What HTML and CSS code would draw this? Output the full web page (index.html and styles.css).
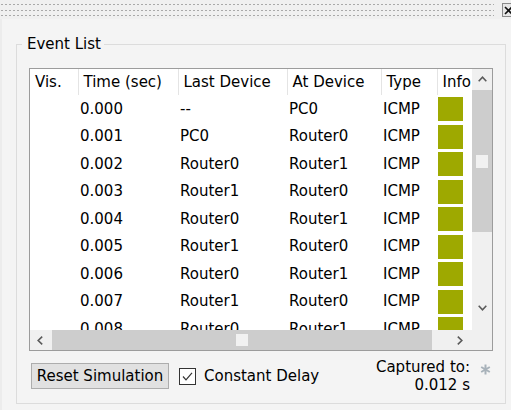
FILE: index.html
```html
<!DOCTYPE html>
<html>
<head>
<meta charset="utf-8">
<link rel="stylesheet" href="styles.css">
</head>
<body>
<div class="titlebar">
  <div class="grip"></div>
  <div class="close"><svg width="9" height="9" viewBox="0 0 9 9"><path d="M1 1L8 8M8 1L1 8" stroke="#111" stroke-width="1.6"/></svg></div>
</div>
<div class="panel">
  <fieldset class="group">
    <legend>Event List</legend>
    <div class="list">
      <div class="viewport">
        <table class="events">
          <colgroup><col class="c-vis"><col class="c-time"><col class="c-last"><col class="c-at"><col class="c-type"><col class="c-info"></colgroup>
          <thead>
            <tr><th>Vis.</th><th>Time (sec)</th><th>Last Device</th><th>At Device</th><th>Type</th><th>Info</th></tr>
          </thead>
          <tbody>
            <tr><td></td><td>0.000</td><td>--</td><td>PC0</td><td>ICMP</td><td class="info"><div class="sw"></div></td></tr>
            <tr><td></td><td>0.001</td><td>PC0</td><td>Router0</td><td>ICMP</td><td class="info"><div class="sw"></div></td></tr>
            <tr><td></td><td>0.002</td><td>Router0</td><td>Router1</td><td>ICMP</td><td class="info"><div class="sw"></div></td></tr>
            <tr><td></td><td>0.003</td><td>Router1</td><td>Router0</td><td>ICMP</td><td class="info"><div class="sw"></div></td></tr>
            <tr><td></td><td>0.004</td><td>Router0</td><td>Router1</td><td>ICMP</td><td class="info"><div class="sw"></div></td></tr>
            <tr><td></td><td>0.005</td><td>Router1</td><td>Router0</td><td>ICMP</td><td class="info"><div class="sw"></div></td></tr>
            <tr><td></td><td>0.006</td><td>Router0</td><td>Router1</td><td>ICMP</td><td class="info"><div class="sw"></div></td></tr>
            <tr><td></td><td>0.007</td><td>Router1</td><td>Router0</td><td>ICMP</td><td class="info"><div class="sw"></div></td></tr>
            <tr><td></td><td>0.008</td><td>Router0</td><td>Router1</td><td>ICMP</td><td class="info"><div class="sw"></div></td></tr>
            <tr><td></td><td>0.009</td><td>Router1</td><td>Router0</td><td>ICMP</td><td class="info"><div class="sw"></div></td></tr>
          </tbody>
        </table>
      </div>
      <div class="vscroll">
        <div class="arrow"><svg width="9" height="6" viewBox="0 0 9 6"><polyline points="0.7,5.2 4.5,1.2 8.3,5.2" fill="none" stroke="#5a5a5a" stroke-width="1.6"/></svg></div>
        <div class="vtrack"><div class="vthumb"><span class="knob"></span></div></div>
        <div class="arrow"><svg width="9" height="6" viewBox="0 0 9 6"><polyline points="0.7,0.8 4.5,4.8 8.3,0.8" fill="none" stroke="#5a5a5a" stroke-width="1.6"/></svg></div>
        <div></div>
      </div>
      <div class="hscroll">
        <div class="arrow"><svg width="6" height="9" viewBox="0 0 6 9"><polyline points="5.2,0.7 1.2,4.5 5.2,8.3" fill="none" stroke="#5a5a5a" stroke-width="1.6"/></svg></div>
        <div class="htrack"><div class="hthumb"><span class="knob"></span></div></div>
        <div class="arrow"><svg width="6" height="9" viewBox="0 0 6 9"><polyline points="0.8,0.7 4.8,4.5 0.8,8.3" fill="none" stroke="#5a5a5a" stroke-width="1.6"/></svg></div>
        <div></div>
      </div>
      <div class="corner"></div>
    </div>
    <div class="actions">
      <button class="btn" type="button">Reset Simulation</button>
      <label class="check"><span class="box"><svg width="13" height="13" viewBox="0 0 13 13"><polyline points="2,6.5 5,9.8 11,2.8" fill="none" stroke="#333" stroke-width="1.2"/></svg></span>Constant Delay</label>
      <div class="captured"><div>Captured to:</div><div>0.012 s</div></div>
      <span class="star"><svg width="11" height="11" viewBox="0 0 11 11"><path d="M5.5 0.5V10.5M1.2 3L9.8 8M9.8 3L1.2 8" stroke="#a8b2ba" stroke-width="2"/></svg></span>
    </div>
  </fieldset>
</div>
</body>
</html>
```
FILE: styles.css
```css
html, body {
  margin: 0;
  padding: 0;
}
body {
  width: 511px;
  height: 410px;
  overflow: hidden;
  background: #ececec;
  font-family: "DejaVu Sans", Verdana, sans-serif;
  font-size: 15px;
  color: #000;
}
.titlebar {
  width: 519px;
  height: 19px;
  display: flex;
  align-items: flex-start;
  background: #f0f0f0;
}
.grip {
  flex: 1;
  height: 19px;
  margin-right: 8px;
  background-image:
    linear-gradient(90deg, #a9a9a9 2px, transparent 2px),
    linear-gradient(90deg, #a9a9a9 2px, transparent 2px),
    linear-gradient(90deg, #a9a9a9 2px, transparent 2px);
  background-size: 4px 1px, 4px 1px, 4px 1px;
  background-repeat: repeat-x;
  background-position: 1px 4px, 1px 10px, 1px 15px;
}
.close {
  width: 14px;
  height: 12px;
  margin-top: 3px;
  border: 1px solid #8a8a8a;
  background: #e6e6e6;
  display: flex;
  align-items: center;
  padding-left: 1px;
}
.panel {
  margin-left: 2px;
  height: 391px;
  box-sizing: border-box;
  background: #f4f4f4;
  padding: 16px 0 0 14px;
}
.group {
  margin: 0 5px 0 0;
  padding: 15px 12px 9px 12px;
  border: 1px solid #dcdcdc;
  min-width: 0;
}
.group legend {
  padding: 0 3px 0 5px;
  margin-left: -7px;
  line-height: 18px;
}
.list {
  display: grid;
  grid-template-columns: 1fr 20px;
  grid-template-rows: 261px 20px;
  border: 1px solid #9c9c9c;
  background: #fff;
}
.viewport {
  overflow: hidden;
}
.events {
  border-collapse: collapse;
  table-layout: fixed;
  width: 452px;
}
.c-vis { width: 48px; }
.c-time { width: 100px; }
.c-last { width: 109px; }
.c-at { width: 94px; }
.c-type { width: 56px; }
.c-info { width: 45px; }
.events thead tr { height: 26px; }
.events th {
  padding: 0 0 0 5px;
  font-weight: normal;
  text-align: left;
  white-space: nowrap;
  overflow: hidden;
  border-right: 1px solid #e4e4e4;
}
.events tbody tr { height: 27.5px; }
.events td {
  padding: 0 0 0 2px;
  white-space: nowrap;
  overflow: hidden;
  vertical-align: middle;
}
.events td.info {
  padding: 2px 0 0 1px;
  vertical-align: top;
}
.sw {
  width: 25px;
  height: 24px;
  background: #9ea900;
}
.vscroll {
  display: grid;
  grid-template-rows: 20px 1fr 20px 12px;
  background: #f0f0f0;
}
.hscroll {
  display: grid;
  grid-template-columns: 20px 1fr 20px 2px;
  background: #f0f0f0;
}
.arrow {
  display: flex;
  align-items: center;
  justify-content: center;
}
.vtrack {
  padding-top: 1px;
}
.vthumb {
  height: 142px;
  background: #cdcdcd;
  display: flex;
  align-items: center;
  justify-content: center;
}
.vthumb .knob {
  width: 12px;
  height: 13px;
  background: #f1f1f1;
}
.htrack {
  padding-left: 2px;
}
.hthumb {
  width: 380px;
  height: 100%;
  background: #cdcdcd;
  display: flex;
  align-items: center;
  justify-content: center;
}
.hthumb .knob {
  width: 12px;
  height: 12px;
  background: #f1f1f1;
}
.corner {
  background: #f0f0f0;
}
.actions {
  display: flex;
  align-items: center;
  margin-top: 7px;
}
.btn {
  width: 138px;
  height: 26px;
  margin: 0 0 0 2px;
  padding: 0;
  border: 1px solid #adadad;
  background: #e1e1e1;
  font: inherit;
  color: #000;
}
.check {
  display: flex;
  align-items: center;
  gap: 8px;
  margin-left: 10px;
}
.box {
  width: 15px;
  height: 15px;
  border: 1px solid #333;
  background: #fff;
  display: flex;
  align-items: center;
  justify-content: center;
}
.captured {
  margin-left: auto;
  text-align: right;
  line-height: 18px;
}
.star {
  align-self: flex-start;
  margin: 6px 2px 0 10px;
  display: flex;
}
```
